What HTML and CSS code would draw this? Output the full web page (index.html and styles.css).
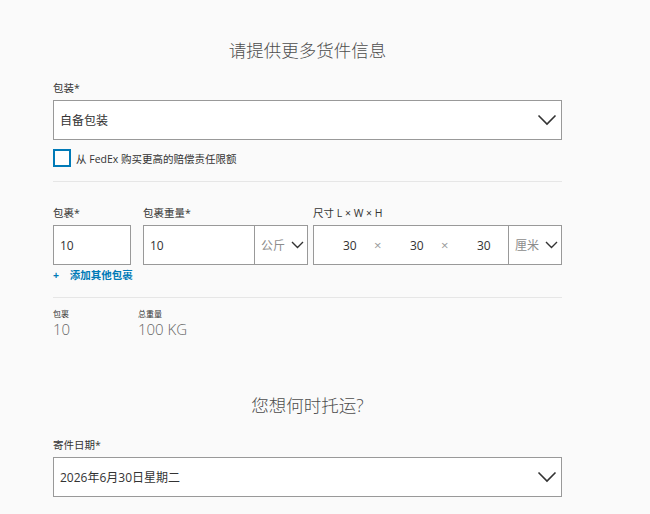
FILE: index.html
```html
<!DOCTYPE html>
<html lang="zh-CN">
<head>
    <meta charset="UTF-8">
    <title>货件信息</title>
    <link rel="stylesheet" href="styles.css">
</head>
<body>

<div class="page">
    <h2 class="title">请提供更多货件信息</h2>

    <div class="label">包装*</div>
    <div class="select">
        <span>自备包装</span>
        <svg class="chev" width="20" height="12" viewBox="0 0 20 12"><path d="M1.5 1.5 L10 10 L18.5 1.5" fill="none" stroke="#333" stroke-width="1.6"/></svg>
    </div>

    <label class="check">
        <span class="box"></span>
        <span>从 FedEx 购买更高的赔偿责任限额</span>
    </label>

    <hr class="divider">

    <div class="pkg-row">
        <div class="field f-count">
            <div class="label">包裹*</div>
            <div class="input">10</div>
        </div>
        <div class="field f-weight">
            <div class="label">包裹重量*</div>
            <div class="input split">
                <span class="main">10</span>
                <span class="unit">公斤 <svg width="13" height="8" viewBox="0 0 13 8"><path d="M1 1 L6.5 6.5 L12 1" fill="none" stroke="#333" stroke-width="1.4"/></svg></span>
            </div>
        </div>
        <div class="field f-dims">
            <div class="label">尺寸 L × W × H</div>
            <div class="input split">
                <span class="dims">
                    <span class="num">30</span><span class="x">×</span>
                    <span class="num">30</span><span class="x">×</span>
                    <span class="num">30</span>
                </span>
                <span class="unit">厘米 <svg width="13" height="8" viewBox="0 0 13 8"><path d="M1 1 L6.5 6.5 L12 1" fill="none" stroke="#333" stroke-width="1.4"/></svg></span>
            </div>
        </div>
    </div>

    <a class="add" href="#"><span class="plus">+</span> 添加其他包裹</a>

    <hr class="divider second">

    <div class="totals">
        <div class="total">
            <div class="t-label">包裹</div>
            <div class="t-value">10</div>
        </div>
        <div class="total">
            <div class="t-label">总重量</div>
            <div class="t-value">100 KG</div>
        </div>
    </div>

    <h2 class="title when">您想何时托运?</h2>

    <div class="label">寄件日期*</div>
    <div class="select">
        <span>2026年6月30日星期二</span>
        <svg class="chev" width="20" height="12" viewBox="0 0 20 12"><path d="M1.5 1.5 L10 10 L18.5 1.5" fill="none" stroke="#333" stroke-width="1.6"/></svg>
    </div>
</div>

</body>
</html>
```

FILE: styles.css
```css
body {
    margin: 0;
    background: #fafafa;
    font-family: "Open Sans", "Noto Sans CJK SC", sans-serif;
    color: #333;
}

.page {
    width: 509px;
    margin-left: 53px;
    padding-top: 35px;
}

.title {
    margin: 0 0 16px;
    text-align: center;
    font-size: 17.5px;
    font-weight: 300;
    color: #4d4d4d;
    line-height: 30px;
}

.label {
    font-size: 10.5px;
    line-height: 14px;
    color: #333;
    margin-bottom: 5px;
}

.select {
    height: 38px;
    border: 1px solid #999;
    background: #fff;
    display: flex;
    align-items: center;
    justify-content: space-between;
    padding: 0 4px 0 6px;
    font-size: 12px;
}

.check {
    display: flex;
    align-items: center;
    gap: 5px;
    margin-top: 9px;
    font-size: 10.5px;
    color: #333;
}

.box {
    width: 14px;
    height: 14px;
    border: 2px solid #007ab7;
    background: #fff;
}

.divider {
    border: none;
    border-top: 1px solid #e6e6e6;
    margin: 14px 0 24px;
}

.pkg-row {
    display: flex;
    gap: 12px;
}

.f-count {
    width: 78px;
}

.f-weight {
    width: 165px;
}

.f-dims {
    width: 249px;
    margin-left: -7px;
}

.input {
    height: 38px;
    border: 1px solid #999;
    background: #fff;
    display: flex;
    align-items: center;
    padding-left: 6px;
    font-size: 12px;
}

.input.split {
    padding-left: 0;
}

.main {
    flex: 1;
    padding-left: 6px;
}

.unit {
    width: 53px;
    height: 100%;
    border-left: 1px solid #999;
    display: flex;
    align-items: center;
    gap: 6px;
    padding-left: 6px;
    box-sizing: border-box;
    color: #8c8c8c;
    font-size: 12px;
}

.dims {
    flex: 1;
    display: flex;
    align-items: center;
    padding-left: 29px;
}

.num {
    width: 16px;
    color: #333;
}

.x {
    color: #999;
    width: 51px;
    padding-left: 15px;
    box-sizing: border-box;
    font-size: 13px;
}

.add {
    display: block;
    width: max-content;
    margin-top: 3px;
    line-height: 14px;
    color: #007ab7;
    text-decoration: none;
    font-size: 10.5px;
    font-weight: 600;
}

.plus {
    margin-right: 8px;
    font-weight: 700;
}

.divider.second {
    margin: 15px 0 11px;
}

.totals {
    display: flex;
}

.total {
    width: 85px;
}

.t-label {
    font-size: 8px;
    line-height: 10px;
    color: #333;
}

.t-value {
    font-size: 15px;
    font-weight: 300;
    color: #666;
    line-height: 20px;
}

.title.when {
    margin-top: 51px;
    margin-bottom: 18px;
}
```
